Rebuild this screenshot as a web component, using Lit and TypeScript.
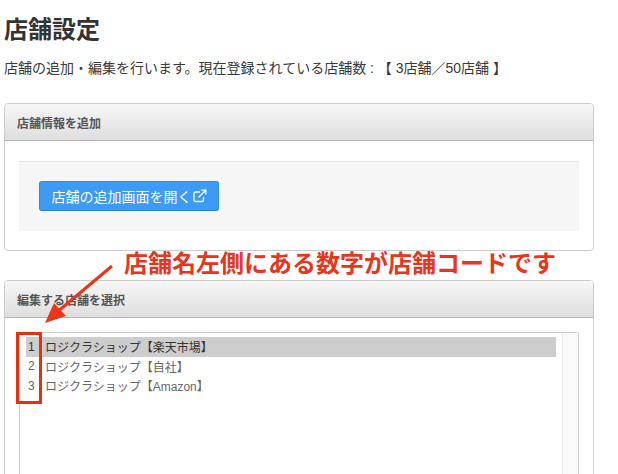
import { LitElement, html, css } from "lit";
import { customElement } from "lit/decorators.js";

const shops = ["ロジクラショップ【楽天市場】", "ロジクラショップ【自社】", "ロジクラショップ【Amazon】"];

@customElement("app-root")
export class AppRoot extends LitElement {
  static styles = css`
    :host {
      display: block;
      position: relative;
      width: 618px;
      height: 474px;
      overflow: hidden;
      background: #fff;
      color: #333;
      font-family: "Liberation Sans", "Noto Sans CJK JP", sans-serif;
    }
    .page {
      display: flex;
      flex-direction: column;
      padding: 16px 24px 0 4px;
    }
    h1 {
      margin: 0;
      font-size: 24px;
      line-height: 28px;
      font-weight: 700;
      color: #333;
    }
    .desc {
      margin: 14px 0 0;
      font-size: 14px;
      line-height: 20px;
      color: #3a3a3a;
    }
    .panel {
      border: 1px solid #ccc;
      border-radius: 4px;
      background: #fff;
    }
    .panel.add {
      margin-top: 25px;
      height: 148px;
      box-sizing: border-box;
    }
    .panel.pick {
      margin-top: 29px;
      height: 220px;
      box-sizing: border-box;
    }
    .head {
      height: 37px;
      box-sizing: border-box;
      padding-left: 12px;
      display: flex;
      align-items: center;
      font-size: 12px;
      font-weight: 700;
      color: #555;
      background: linear-gradient(#f7f7f7, #dedede);
      border-bottom: 1px solid #b5b5b5;
      border-radius: 3px 3px 0 0;
    }
    .well {
      margin: 20px 14px 0;
      height: 70px;
      box-sizing: border-box;
      padding: 19px 20px;
      background: #f6f6f6;
      border-top: 1px solid #e6e6e6;
    }
    .btn {
      display: inline-flex;
      align-items: center;
      justify-content: center;
      gap: 1px;
      width: 180px;
      height: 30px;
      box-sizing: border-box;
      color: #fff;
      font-size: 14px;
      background: #3b9bf5;
      border: 1px solid #2f8be0;
      border-bottom-color: #2a7fd0;
      border-radius: 3px;
    }
    .list {
      margin: 14px 14px 0;
      height: 160px;
      box-sizing: border-box;
      display: flex;
      border: 1px solid #ccc;
      border-bottom: none;
      border-radius: 3px 3px 0 0;
    }
    .rows {
      flex: 1;
      padding: 4px 6px 0 6px;
      font-size: 12px;
      color: #666;
    }
    .row {
      display: flex;
      height: 19.5px;
      align-items: center;
    }
    .row.sel {
      background: #cdcdcd;
      color: #333;
    }
    .num {
      width: 19px;
      padding-left: 2px;
      box-sizing: border-box;
    }
    .bar {
      width: 15px;
      background: #fafafa;
      border-left: 1px solid #e8e8e8;
    }
    .note {
      position: absolute;
      left: 124px;
      top: 249px;
      font-size: 24px;
      line-height: 30px;
      font-weight: 700;
      color: #e8351c;
      white-space: nowrap;
    }
    .box {
      position: absolute;
      left: 16px;
      top: 332px;
      width: 26px;
      height: 72px;
      box-sizing: border-box;
      border: 3px solid #e8300f;
    }
    .arrow {
      position: absolute;
      left: 40px;
      top: 260px;
    }
  `;

  render() {
    return html`
      <div class="page">
        <h1>店舗設定</h1>
        <p class="desc">店舗の追加・編集を行います。現在登録されている店舗数 : 【 3店舗／50店舗 】</p>
        <section class="panel add">
          <div class="head">店舗情報を追加</div>
          <div class="well">
            <div class="btn">
              店舗の追加画面を開く
              <svg width="14" height="14" viewBox="0 0 14 14" fill="none" stroke="#fff" stroke-width="1.3">
                <path d="M7 3H2.500A1.500 1.500 0 0 0 1 4.500V11a1.500 1.500 0 0 0 1.500 1.500H9A1.500 1.500 0 0 0 10.500 11V8" />
                <path d="M5.500 8.500L12.500 1.500M8.500 1.200H12.800V5.500" />
              </svg>
            </div>
          </div>
        </section>
        <section class="panel pick">
          <div class="head">編集する店舗を選択</div>
          <div class="list">
            <div class="rows">
              ${shops.map(
                (s, i) => html`<div class="row ${i === 0 ? "sel" : ""}"><span class="num">${i + 1}</span><span>${s}</span></div>`
              )}
            </div>
            <div class="bar"></div>
          </div>
        </section>
      </div>
      <div class="note">店舗名左側にある数字が店舗コードです</div>
      <div class="box"></div>
      <svg class="arrow" width="80" height="70" viewBox="0 0 80 70">
        <path d="M72 6L16 53" stroke="#e8351c" stroke-width="3" fill="none" />
        <path d="M5 63L14 43L26 56Z" fill="#e8351c" />
      </svg>
    `;
  }
}
